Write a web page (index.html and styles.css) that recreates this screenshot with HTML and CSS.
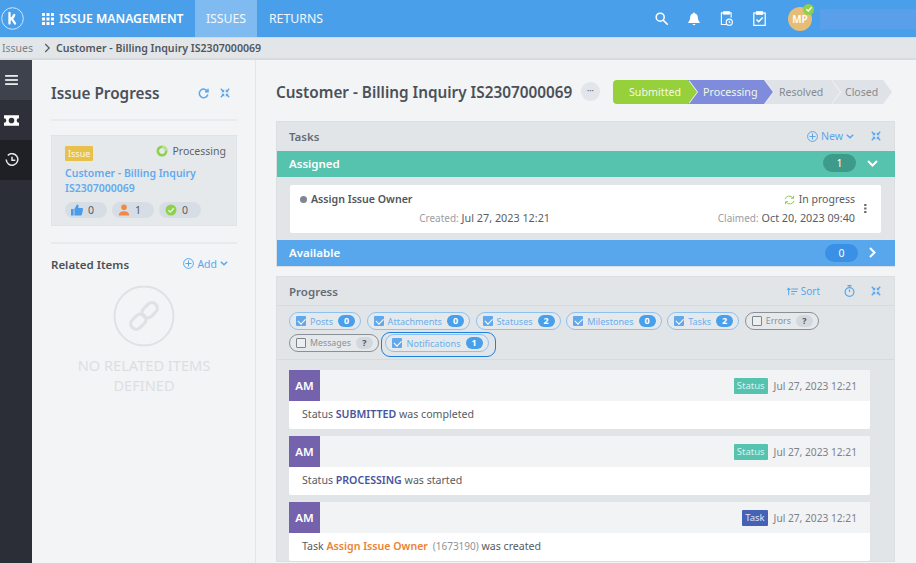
FILE: index.html
```html
<!DOCTYPE html>
<html lang="en">
<head>
<meta charset="utf-8">
<title>Issue</title>
<link rel="stylesheet" href="styles.css">
</head>
<body>
<header class="topbar">
  <div class="logo"><svg width="23" height="23" viewBox="0 0 23 23"><circle cx="11.500" cy="11.500" r="10.800" fill="none" stroke="#cfe5fa" stroke-width="1"/><path d="M8.500 6v10.500M8.700 12.500c2-.2 3.500-2 4.500-4.500M10 11.500c1.500.5 2.500 2.500 4 5" fill="none" stroke="#fff" stroke-width="2.300" stroke-linecap="round"/></svg></div>
  <svg class="apps" width="12" height="12" viewBox="0 0 12 12" fill="#fff"><rect width="3" height="3"/><rect x="4.500" width="3" height="3"/><rect x="9" width="3" height="3"/><rect y="4.500" width="3" height="3"/><rect x="4.500" y="4.500" width="3" height="3"/><rect x="9" y="4.500" width="3" height="3"/><rect y="9" width="3" height="3"/><rect x="4.500" y="9" width="3" height="3"/><rect x="9" y="9" width="3" height="3"/></svg>
  <div class="brand">ISSUE MANAGEMENT</div>
  <nav class="tabs"><a class="tab active">ISSUES</a><a class="tab">RETURNS</a></nav>
  <div class="top-icons">
    <svg width="13" height="13" viewBox="0 0 14 14" fill="none" stroke="#fff" stroke-width="1.700"><circle cx="5.600" cy="5.600" r="4.300"/><path d="M8.800 8.800l4.400 4.400" stroke-linecap="round"/></svg>
    <svg width="12" height="14" viewBox="0 0 13 14" fill="#fff"><path d="M6.500 0a1 1 0 0 1 1 1.100c2.200.5 3.200 2.200 3.200 4.400 0 2.600.9 3.700 2 4.900v1H.3v-1c1.100-1.200 2-2.300 2-4.900 0-2.200 1-3.900 3.200-4.400A1 1 0 0 1 6.500 0zM5 12.400h3a1.500 1.500 0 0 1-3 0z"/></svg>
    <svg width="13" height="15" viewBox="0 0 14 16" fill="none" stroke="#fff" stroke-width="1.200"><path d="M4 2H1.500v12.500H7M10 2h2v5"/><rect x="4" y=".8" width="6" height="2.400" fill="#fff"/><circle cx="10" cy="12" r="3.300"/><path d="M10 10.300V12l1.200.7"/></svg>
    <svg width="13" height="15" viewBox="0 0 13 15" fill="none" stroke="#fff" stroke-width="1.200"><rect x=".8" y="2" width="11.400" height="12.400"/><rect x="3.500" y=".8" width="6" height="2.400" fill="#fff"/><path d="M3.500 8.500l2.200 2.200 4-4.200" stroke-width="1.500"/></svg>
  </div>
  <div class="avatar">MP<span class="avatar-ok"><svg width="8" height="8" viewBox="0 0 8 8" fill="none" stroke="#fff" stroke-width="1.300"><path d="M1.300 4.200l2 1.800 3.300-3.800"/></svg></span></div>
  <div class="user-blur"></div>
</header>
<div class="crumbs"><span class="crumb-root">Issues</span><svg width="7" height="10" viewBox="0 0 7 10" fill="none" stroke="#555b63" stroke-width="1.200"><path d="M1.200 1l4 4-4 4"/></svg><span class="crumb-current">Customer - Billing Inquiry IS2307000069</span></div>
<div class="layout">
  <aside class="rail">
    <div class="rail-item r1"><svg width="13" height="10" viewBox="0 0 14 11" fill="#e8eaec"><rect width="14" height="2"/><rect y="4.500" width="14" height="2"/><rect y="9" width="14" height="2"/></svg></div>
    <div class="rail-item r2"><svg width="15" height="11" viewBox="0 0 16 11" fill="#fff"><path d="M0 0h16v3a2.500 2.500 0 0 0 0 5v3H0V8a2.500 2.500 0 0 0 0-5z"/><circle cx="8" cy="5.500" r="3" fill="#2d3038"/></svg></div>
    <div class="rail-item r3"><svg width="14" height="14" viewBox="0 0 15 15" fill="none" stroke="#e8eaec" stroke-width="1.600"><path d="M3 2.600A6.200 6.200 0 1 1 1.300 7"/><path d="M7.500 4v3.800H11"/></svg></div>
  </aside>
  <section class="side">
    <div class="side-head"><h2>Issue Progress</h2><svg class="refresh" width="11" height="11" viewBox="0 0 11 11" fill="none" stroke="#5aa6ec" stroke-width="1.500"><path d="M9.500 3.500A4.300 4.300 0 1 0 9.800 6.500"/><path d="M10 .8v3H7"/></svg><svg width="10" height="10" viewBox="0 0 10 10" fill="#5aa6ec"><path d="M4.200 4.200H1.200L2.200 3.200 .3 1.300 1.300 .3 3.200 2.200 4.200 1.200zM5.800 4.200H8.800L7.800 3.200 9.700 1.300 8.700 .3 6.800 2.200 5.800 1.200zM4.200 5.800H1.200L2.200 6.800 .3 8.700 1.300 9.700 3.200 7.800 4.200 8.800zM5.800 5.800H8.800L7.800 6.800 9.700 8.700 8.700 9.700 6.800 7.800 5.800 8.800z"/></svg></div>
    <div class="issue-card">
      <div class="issue-top"><span class="tag-issue">Issue</span><span class="proc"><svg width="12" height="12" viewBox="0 0 12 12"><circle cx="6" cy="6" r="4.200" fill="none" stroke="#8fd14f" stroke-width="2.600"/><path d="M6 1.800A4.200 4.200 0 0 1 10.200 6" fill="none" stroke="#b9e08c" stroke-width="2.600"/></svg>Processing</span></div>
      <a class="issue-link">Customer - Billing Inquiry IS2307000069</a>
      <div class="stats">
        <span class="stat"><svg width="12" height="12" viewBox="0 0 12 12" fill="#4a9cea"><rect y="5" width="2.600" height="6.500"/><path d="M3.400 5L6 .5c1.300 0 1.800 1 1.500 2.200L7.200 4H11c.8 0 1.200.8 1 1.500l-1.200 5.200c-.2.600-.6.800-1.200.8H3.400z"/></svg>0</span>
        <span class="stat"><svg width="12" height="12" viewBox="0 0 12 12" fill="#ef8a45"><circle cx="6" cy="3.200" r="2.800"/><path d="M.8 11.500c0-3 2-4.300 5.200-4.300s5.200 1.300 5.200 4.300z"/></svg>1</span>
        <span class="stat"><svg width="12" height="12" viewBox="0 0 12 12"><circle cx="6" cy="6" r="5.500" fill="#8fd14f"/><path d="M3.300 6.200l2 1.900 3.500-3.800" fill="none" stroke="#e6f5d5" stroke-width="1.400"/></svg>0</span>
      </div>
    </div>
    <div class="related-head"><h3>Related Items</h3><a class="action"><svg width="11" height="11" viewBox="0 0 11 11" fill="none" stroke="#5aa6ec" stroke-width="1"><circle cx="5.500" cy="5.500" r="4.900"/><path d="M5.500 2.500v6M2.500 5.500h6"/></svg>Add<svg width="8" height="5" viewBox="0 0 8 5" fill="none" stroke="#5aa6ec" stroke-width="1.500"><path d="M.8.800L4 3.800 7.200.8"/></svg></a></div>
    <div class="empty">
      <svg width="62" height="62" viewBox="0 0 62 62" fill="none" stroke="#dfe1e4" stroke-width="2"><circle cx="31" cy="31" r="29.500"/><g stroke-width="3.200" stroke-linecap="round" transform="rotate(-45 31 31)"><rect x="14.500" y="25.500" width="17" height="11" rx="5.500"/><rect x="30.500" y="25.500" width="17" height="11" rx="5.500"/></g></svg>
      <p>NO RELATED ITEMS DEFINED</p>
    </div>
  </section>
  <main class="main">
    <div class="title-row">
      <h1>Customer - Billing Inquiry IS2307000069</h1>
      <span class="more">•••</span>
      <div class="steps">
        <span class="step s1">Submitted</span><span class="step s2">Processing</span><span class="step s3">Resolved</span><span class="step s4">Closed</span>
      </div>
    </div>
    <section class="panel tasks">
      <div class="panel-head"><h3>Tasks</h3><a class="action"><svg width="11" height="11" viewBox="0 0 11 11" fill="none" stroke="#5aa6ec" stroke-width="1"><circle cx="5.500" cy="5.500" r="4.900"/><path d="M5.500 2.500v6M2.500 5.500h6"/></svg>New<svg width="8" height="5" viewBox="0 0 8 5" fill="none" stroke="#5aa6ec" stroke-width="1.500"><path d="M.8.800L4 3.800 7.200.8"/></svg></a><svg class="shrink" width="10" height="10" viewBox="0 0 10 10" fill="#5aa6ec"><path d="M4.200 4.200H1.200L2.200 3.200 .3 1.300 1.300 .3 3.200 2.200 4.200 1.200zM5.800 4.200H8.800L7.800 3.200 9.700 1.300 8.700 .3 6.800 2.200 5.800 1.200zM4.200 5.800H1.200L2.200 6.800 .3 8.700 1.300 9.700 3.200 7.800 4.200 8.800zM5.800 5.800H8.800L7.800 6.800 9.700 8.700 8.700 9.700 6.800 7.800 5.800 8.800z"/></svg></div>
      <div class="band green"><span>Assigned</span><span class="count c-green">1</span><svg width="11" height="7" viewBox="0 0 11 7" fill="none" stroke="#fff" stroke-width="2"><path d="M1 1l4.500 4.500L10 1"/></svg></div>
      <div class="task-wrap">
        <div class="task">
          <div class="task-left">
            <div class="task-name"><i class="dot"></i>Assign Issue Owner</div>
            <div class="task-meta"><small>Created:</small> Jul 27, 2023 12:21</div>
          </div>
          <div class="task-right">
            <div class="task-state"><svg width="11" height="10" viewBox="0 0 11 10" fill="none" stroke="#8fd14f" stroke-width="1"><path d="M1 4.200A4.500 4.500 0 0 1 9 3M10 5.800A4.500 4.500 0 0 1 2 7"/><path d="M9.500 .8V3.300H7M1.500 9.200V6.700H4"/></svg>In progress</div>
            <div class="task-meta"><small>Claimed:</small> Oct 20, 2023 09:40</div>
          </div>
          <svg class="kebab" width="3" height="9" viewBox="0 0 3 10" fill="#666c74"><rect width="2.600" height="2.200"/><rect y="3.900" width="2.600" height="2.200"/><rect y="7.800" width="2.600" height="2.200"/></svg>
        </div>
      </div>
      <div class="band blue"><span>Available</span><span class="count c-blue">0</span><svg class="chev" width="7" height="11" viewBox="0 0 7 11" fill="none" stroke="#fff" stroke-width="2"><path d="M1 1l4.500 4.500L1 10"/></svg></div>
    </section>
    <section class="panel progress">
      <div class="panel-head"><h3>Progress</h3><a class="action sort"><svg width="11" height="9" viewBox="0 0 13 9" fill="none" stroke="#5aa6ec" stroke-width="1.200"><path d="M2 9V1M.3 2.500L2 .6l1.700 1.900M5 1.500h8M5 4.500h7M5 7.500h4"/></svg>Sort</a><svg class="timer" width="11" height="12" viewBox="0 0 11 12" fill="none" stroke="#5aa6ec" stroke-width="1.200"><circle cx="5.500" cy="7" r="4.400"/><path d="M3.500.7h4M5.500 1v1.500M5.500 4.500V7"/></svg><svg width="10" height="10" viewBox="0 0 10 10" fill="#5aa6ec"><path d="M4.200 4.200H1.200L2.200 3.200 .3 1.300 1.300 .3 3.200 2.200 4.200 1.200zM5.800 4.200H8.800L7.800 3.200 9.700 1.300 8.700 .3 6.800 2.200 5.800 1.200zM4.200 5.800H1.200L2.200 6.800 .3 8.700 1.300 9.700 3.200 7.800 4.200 8.800zM5.800 5.800H8.800L7.800 6.800 9.700 8.700 8.700 9.700 6.800 7.800 5.800 8.800z"/></svg></div>
      <div class="filters">
        <span class="chip"><i class="box on"></i>Posts<b>0</b></span>
        <span class="chip"><i class="box on"></i>Attachments<b>0</b></span>
        <span class="chip"><i class="box on"></i>Statuses<b>2</b></span>
        <span class="chip"><i class="box on"></i>Milestones<b>0</b></span>
        <span class="chip"><i class="box on"></i>Tasks<b>2</b></span>
        <span class="chip off"><i class="box"></i>Errors<b>?</b></span>
        <span class="chip off"><i class="box"></i>Messages<b>?</b></span>
        <span class="focus"><span class="chip"><i class="box on"></i>Notifications<b>1</b></span></span>
      </div>
      <div class="feed">
        <article class="entry">
          <div class="entry-head"><span class="am">AM</span><span class="type t-status">Status</span><time>Jul 27, 2023 12:21</time></div>
          <div class="entry-body">Status <strong class="navy">SUBMITTED</strong> was completed</div>
        </article>
        <article class="entry">
          <div class="entry-head"><span class="am">AM</span><span class="type t-status">Status</span><time>Jul 27, 2023 12:21</time></div>
          <div class="entry-body">Status <strong class="navy">PROCESSING</strong> was started</div>
        </article>
        <article class="entry">
          <div class="entry-head"><span class="am">AM</span><span class="type t-task">Task</span><time>Jul 27, 2023 12:21</time></div>
          <div class="entry-body">Task <strong class="orange">Assign Issue Owner</strong> <span class="id">(1673190)</span> was created</div>
        </article>
      </div>
    </section>
  </main>
</div>
</body>
</html>
```
FILE: styles.css
```css
* { box-sizing: border-box; }
html, body { margin: 0; height: 100%; overflow: hidden; }
body { width: 916px; height: 563px; background: #f2f4f6; font-family: "Noto Sans", "Open Sans", sans-serif; color: #555b63; font-size: 11px; display: flex; flex-direction: column; }
h1, h2, h3, p { margin: 0; }
a { color: #5aa6ec; }

.topbar { height: 37px; flex: none; background: #4a9fea; display: flex; align-items: center; color: #fff; }
.logo { width: 23px; height: 23px; margin-left: 0.500px; display: flex; }
.apps { margin-left: 18.500px; }
.brand { margin-left: 5px; font-size: 12.200px; font-weight: 600; width: 136px; white-space: nowrap; }
.tabs { display: flex; height: 37px; }
.tab { width: 62px; display: flex; align-items: center; justify-content: center; font-size: 12.300px; color: #f2f8fe; }
.tab + .tab { width: 78px; }
.tab.active { background: #7fbbf0; }
.top-icons { margin-left: 320px; display: flex; align-items: center; gap: 20px; }
.avatar { position: relative; margin-left: 22px; width: 24px; height: 24px; border-radius: 50%; background: #e6bd77; display: flex; align-items: center; justify-content: center; font-size: 10px; font-weight: 600; color: #fff; }
.avatar-ok { position: absolute; top: -3px; right: -2px; width: 11px; height: 11px; border-radius: 50%; background: #8fd14f; display: flex; align-items: center; justify-content: center; }
.user-blur { margin-left: 8px; flex: 1; height: 20px; background: #5a9fe9; }

.crumbs { height: 23px; flex: none; background: #e3e6e9; border-top: 1px solid #d5dade; border-bottom: 2px solid #d8dbde; display: flex; align-items: center; padding-left: 2px; font-size: 10.500px; }
.crumb-root { color: #7b8189; width: 42px; }
.crumbs svg { flex: none; }
.crumb-current { margin-left: 5px; font-size: 10.600px; font-weight: 600; color: #50565e; }

.layout { flex: 1; display: flex; min-height: 0; }
.rail { width: 32px; flex: none; background: #2b2e36; display: flex; flex-direction: column; }
.rail-item { height: 40px; display: flex; align-items: center; justify-content: center; padding-right: 9px; }
.r1 { background: #3e424c; }
.r2 { background: #2d3038; }
.r3 { background: #1e2025; }

.side { width: 224px; flex: none; border-right: 1px solid #e3e6e9; padding: 0 18px 0 19px; }
.side-head { height: 61px; padding: 23px 7px 0 0; border-bottom: 2px solid #e8eaed; display: flex; align-items: flex-start; }
.side-head h2 { font-size: 15.300px; font-weight: 600; color: #4b5058; line-height: 21px; flex: 1; }
.side-head svg { margin-top: 5px; }
.refresh { margin-right: 11px; }

.issue-card { margin-top: 14px; height: 91px; background: #e6e9ec; border: 1px solid #e1e4e7; padding: 9px 10px 0 13px; }
.issue-top { display: flex; justify-content: space-between; align-items: flex-start; }
.tag-issue { margin-top: 1px; background: #e8c14d; color: #fdf6dd; font-size: 9px; padding: 0 3px; height: 15px; line-height: 15px; border-radius: 1px; }
.proc { display: flex; align-items: center; gap: 4px; color: #5d636b; font-size: 10.500px; height: 12px; }
.issue-link { display: block; margin-top: 5px; font-weight: 600; font-size: 10.500px; line-height: 15px; width: 150px; color: #62aaee; }
.stats { display: flex; gap: 5px; margin-top: 6px; }
.stat { width: 42px; height: 16px; border-radius: 8px; background: #d7dde4; padding-left: 6px; display: flex; align-items: center; gap: 5px; font-size: 10.500px; color: #555b63; }

.related-head { margin-top: 16px; border-top: 2px solid #e8eaed; padding-top: 10px; display: flex; justify-content: space-between; align-items: center; height: 32px; }
.related-head h3 { font-size: 11.500px; font-weight: 600; color: #4b5058; }
.action { display: flex; align-items: center; gap: 3px; font-size: 10.500px; color: #5aa6ec; }
.related-head .action { margin-right: 9px; margin-top: -1px; }
.empty { margin-top: 11px; text-align: center; }
.empty svg { display: block; margin: 0 0 0 62px; }
.empty p { margin: 8px auto 0; width: 150px; font-size: 14.600px; line-height: 20px; color: #dcdfe2; }

.main { flex: 1; min-width: 0; padding-left: 20px; }
.title-row { height: 61px; display: flex; align-items: center; padding-top: 2px; }
.title-row h1 { font-size: 15.300px; font-weight: 600; color: #4b5058; white-space: nowrap; width: 305px; }
.more { width: 19px; height: 19px; border-radius: 50%; background: #e2e5e9; color: #6d7279; font-size: 6px; line-height: 19px; text-align: center; }
.steps { margin-left: 13px; display: flex; }
.step { position: relative; height: 24px; line-height: 24px; font-size: 10.700px; color: #f2f7e8; padding-left: 16px; }
.step::after { content: ""; position: absolute; z-index: 1; top: 0; right: -9px; width: 0; height: 0; border-left: 9px solid transparent; border-top: 12px solid transparent; border-bottom: 12px solid transparent; }
.step::before { content: ""; position: absolute; z-index: 1; top: 0; right: -10px; width: 0; height: 0; border-left: 9px solid #f2f4f6; border-top: 12px solid transparent; border-bottom: 12px solid transparent; }
.s1 { background: #96d03a; width: 75px; border-radius: 4px 0 0 4px; color: #f4f9e8; }
.s1::after { border-left-color: #96d03a; }
.s2 { background: #7f8cdc; width: 76px; padding-left: 15px; }
.s2::after { border-left-color: #7f8cdc; }
.s3 { background: #dfe2e6; width: 67px; padding-left: 15px; color: #858a91; font-size: 10.500px; }
.s3::after { border-left-color: #dfe2e6; }
.s4 { background: #dfe2e6; width: 52px; padding-left: 14px; color: #858a91; font-size: 10.500px; }
.s4::after { border-left-color: #dfe2e6; }
.s4::before { display: none; }

.panel { width: 619px; background: #e2e5e8; border: 1px solid #dcdfe2; }
.panel-head { height: 28px; display: flex; align-items: center; padding: 0 13px 0 12px; }
.tasks .panel-head { height: 29px; padding-bottom: 1px; }
.panel-head h3 { flex: 1; font-size: 11.500px; font-weight: 600; color: #666c74; }
.panel-head .shrink { margin-left: 17px; }
.band { height: 26px; display: flex; align-items: center; padding: 0 17px 0 12px; color: #fff; font-weight: 600; font-size: 11.500px; margin-right: -1px; }
.band span:first-child { flex: 1; }
.green { background: #56c3af; padding-bottom: 2px; }
.blue { background: #58a7ec; padding-bottom: 1px; }
.count { width: 33px; height: 18px; line-height: 18px; border-radius: 9px; text-align: center; font-size: 10.500px; font-weight: 400; margin-right: 11px; }
.c-green { background: #3e9a89; }
.c-blue { background: #3a90e5; }
.chev { margin-right: 2px; }
.task-wrap { padding: 8px 13px 7px; }
.task { height: 48px; background: #fff; border-radius: 2px; display: flex; padding: 0 13px 0 10px; justify-content: space-between; position: relative; }
.task-left { width: 250px; }
.task-name { margin-top: 7px; display: flex; align-items: center; gap: 4px; font-weight: 600; font-size: 10.600px; line-height: 15px; color: #50565e; }
.dot { width: 7px; height: 7px; border-radius: 50%; background: #7e8596; }
.task-meta { margin-top: 3px; font-size: 10.800px; color: #575d65; text-align: right; line-height: 16px; white-space: nowrap; }
.task-meta small { font-size: 10px; color: #9a9ea4; }
.task-right { margin-left: auto; margin-right: 13px; }
.task-state { margin-top: 7px; display: flex; gap: 4px; align-items: center; justify-content: flex-end; font-size: 10.500px; line-height: 15px; }
.kebab { position: absolute; right: 14px; top: 19px; }

.progress { margin-top: 9px; }
.sort { font-size: 10px; }
.timer { margin: 0 16px 0 24px; }
.filters { height: 55px; border-top: 1px solid #d8dbde; border-bottom: 1px solid #d8dbde; padding: 6px 12px 0; display: flex; flex-wrap: wrap; gap: 4px 5.600px; align-content: flex-start; }
.chip { height: 18px; border: 1px solid #8cc2f2; border-radius: 9px; display: inline-flex; align-items: center; padding: 0 5px 0 6px; font-size: 9.100px; color: #6aaeee; white-space: nowrap; background: #e6e9ec; }
.chip b { margin-left: 5px; min-width: 17px; height: 12px; line-height: 12px; border-radius: 6px; background: #4a9fea; color: #fff; font-size: 9px; text-align: center; }
.chip.off { border-color: #8b9096; color: #8b9096; font-size: 8.800px; }
.chip.off b { background: #d3d8de; color: #50565e; }
.box { width: 10px; height: 10px; margin-right: 4px; border: 1px solid #7e848b; background: #eceef0; border-radius: 1px; display: block; }
.box.on { border: 0; background: #62a9ec; position: relative; }
.box.on::after { content: ""; position: absolute; left: 2px; top: 1.500px; width: 6px; height: 3.500px; border-left: 1.300px solid #fff; border-bottom: 1.300px solid #fff; transform: rotate(-45deg); }
.focus { margin: -2px 0 0 -3px; height: 25px; border: 1px solid #1f7fdd; border-radius: 9px; padding: 1px 6px 0 3px; display: inline-flex; align-items: flex-start; }
.feed { padding: 10px 0 0 12px; display: flex; flex-direction: column; gap: 7px; }
.entry { width: 581px; background: #fff; border-radius: 2px; height: 59px; flex: none; }
.entry-head { height: 31px; background: #f1f3f5; display: flex; align-items: center; padding-right: 13px; }
.am { width: 31px; height: 31px; background: #7462ad; color: #fff; font-weight: 600; font-size: 11.500px; line-height: 31px; text-align: center; margin-right: auto; }
.type { height: 16px; line-height: 16px; border-radius: 1px; font-size: 9.500px; padding: 0 3px; color: #d9f3ee; margin-right: 6px; }
.t-status { background: #56c3af; }
.t-task { background: #4562b5; color: #dfe6f5; }
.entry-head time { font-size: 10.200px; color: #7d8289; }
.entry-body { height: 28px; line-height: 26px; padding-left: 13px; font-size: 10.600px; color: #555b63; }
.entry-body strong { font-weight: 600; }
.navy { color: #46549c; }
.orange { color: #ea8336; }
.id { color: #8f9399; font-size: 10px; margin-left: 2px; }
```
